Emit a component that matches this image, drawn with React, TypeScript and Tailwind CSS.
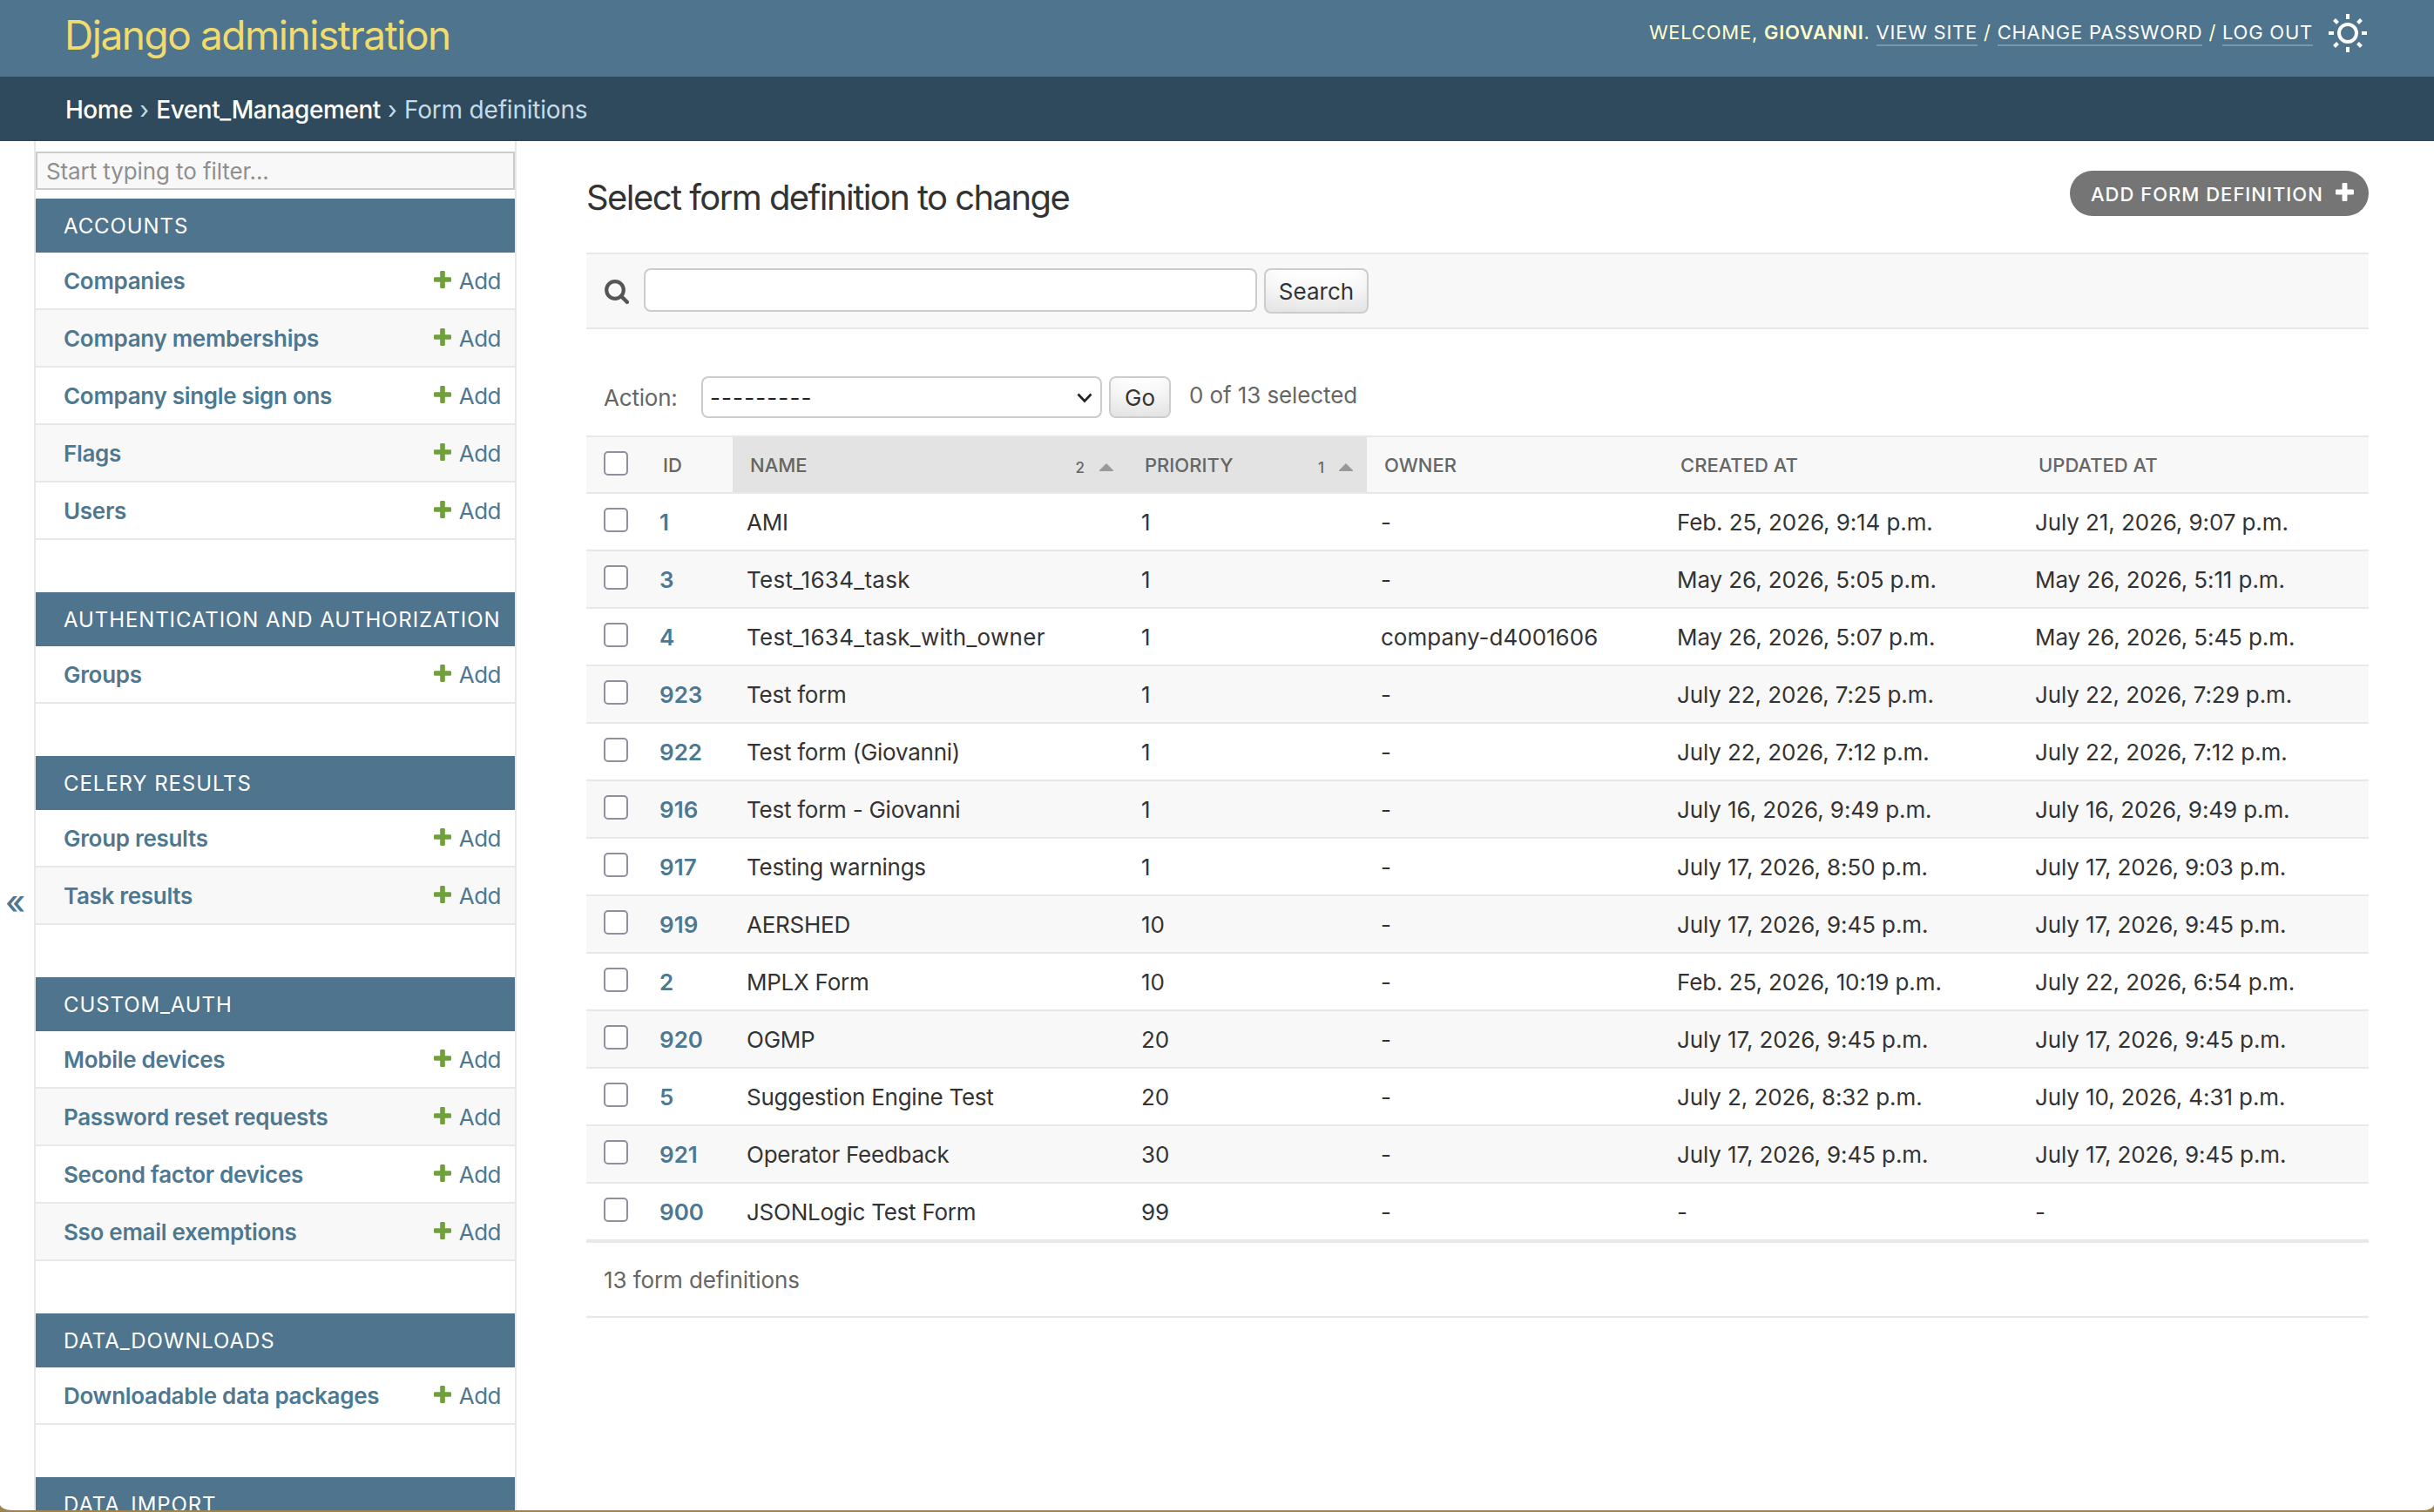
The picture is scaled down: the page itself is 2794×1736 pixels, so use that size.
import React from "react";

type SidebarApp = {
  name: string;
  models: string[];
};

type FormDefinition = {
  id: number;
  name: string;
  priority: number;
  owner: string;
  createdAt: string;
  updatedAt: string;
};

const apps: SidebarApp[] = [
  {
    name: "Accounts",
    models: [
      "Companies",
      "Company memberships",
      "Company single sign ons",
      "Flags",
      "Users",
    ],
  },
  { name: "Authentication and Authorization", models: ["Groups"] },
  { name: "Celery Results", models: ["Group results", "Task results"] },
  {
    name: "Custom_Auth",
    models: [
      "Mobile devices",
      "Password reset requests",
      "Second factor devices",
      "Sso email exemptions",
    ],
  },
  { name: "Data_Downloads", models: ["Downloadable data packages"] },
  { name: "Data_Import", models: [] },
];

const rows: FormDefinition[] = [
  { id: 1, name: "AMI", priority: 1, owner: "-", createdAt: "Feb. 25, 2026, 9:14 p.m.", updatedAt: "July 21, 2026, 9:07 p.m." },
  { id: 3, name: "Test_1634_task", priority: 1, owner: "-", createdAt: "May 26, 2026, 5:05 p.m.", updatedAt: "May 26, 2026, 5:11 p.m." },
  { id: 4, name: "Test_1634_task_with_owner", priority: 1, owner: "company-d4001606", createdAt: "May 26, 2026, 5:07 p.m.", updatedAt: "May 26, 2026, 5:45 p.m." },
  { id: 923, name: "Test form", priority: 1, owner: "-", createdAt: "July 22, 2026, 7:25 p.m.", updatedAt: "July 22, 2026, 7:29 p.m." },
  { id: 922, name: "Test form (Giovanni)", priority: 1, owner: "-", createdAt: "July 22, 2026, 7:12 p.m.", updatedAt: "July 22, 2026, 7:12 p.m." },
  { id: 916, name: "Test form - Giovanni", priority: 1, owner: "-", createdAt: "July 16, 2026, 9:49 p.m.", updatedAt: "July 16, 2026, 9:49 p.m." },
  { id: 917, name: "Testing warnings", priority: 1, owner: "-", createdAt: "July 17, 2026, 8:50 p.m.", updatedAt: "July 17, 2026, 9:03 p.m." },
  { id: 919, name: "AERSHED", priority: 10, owner: "-", createdAt: "July 17, 2026, 9:45 p.m.", updatedAt: "July 17, 2026, 9:45 p.m." },
  { id: 2, name: "MPLX Form", priority: 10, owner: "-", createdAt: "Feb. 25, 2026, 10:19 p.m.", updatedAt: "July 22, 2026, 6:54 p.m." },
  { id: 920, name: "OGMP", priority: 20, owner: "-", createdAt: "July 17, 2026, 9:45 p.m.", updatedAt: "July 17, 2026, 9:45 p.m." },
  { id: 5, name: "Suggestion Engine Test", priority: 20, owner: "-", createdAt: "July 2, 2026, 8:32 p.m.", updatedAt: "July 10, 2026, 4:31 p.m." },
  { id: 921, name: "Operator Feedback", priority: 30, owner: "-", createdAt: "July 17, 2026, 9:45 p.m.", updatedAt: "July 17, 2026, 9:45 p.m." },
  { id: 900, name: "JSONLogic Test Form", priority: 99, owner: "-", createdAt: "-", updatedAt: "-" },
];

const PlusIcon = ({ className }: { className: string }) => (
  <svg viewBox="0 0 20 20" className={className} fill="currentColor">
    <path d="M8.4 0h3.2a1.2 1.2 0 0 1 1.2 1.2v6h6a1.2 1.2 0 0 1 1.2 1.2v3.2a1.2 1.2 0 0 1-1.2 1.2h-6v6a1.2 1.2 0 0 1-1.2 1.2H8.4a1.2 1.2 0 0 1-1.2-1.2v-6h-6A1.2 1.2 0 0 1 0 11.6V8.4a1.2 1.2 0 0 1 1.2-1.2h6v-6A1.2 1.2 0 0 1 8.4 0z" />
  </svg>
);

const SunIcon = () => (
  <svg
    viewBox="0 0 44 44"
    className="ml-[18px] h-11 w-11 shrink-0"
    fill="none"
    stroke="#fff"
    strokeWidth="4"
  >
    <circle cx="22" cy="22" r="10" />
    <path d="M22 0v6M22 38v6M0 22h6M38 22h6M6.5 6.5l4 4M33.5 33.5l4 4M37.5 6.5l-4 4M10.5 33.5l-4 4" />
  </svg>
);

const Checkbox = () => (
  <input
    type="checkbox"
    className="block h-7 w-7 appearance-none rounded-[5px] border-2 border-[#8f8f9d] bg-white"
  />
);

const SortMark = ({ priority }: { priority: number }) => (
  <span className="flex items-center pt-1">
    <span className="pt-[3px] text-[17px] font-medium">{priority}</span>
    <svg viewBox="0 0 16 9" className="mr-4 ml-[17px] h-[9px] w-4" fill="#999">
      <path d="M8 0l8 8v1H0V8z" />
    </svg>
  </span>
);

const HeaderLink = ({ children }: { children: React.ReactNode }) => (
  <a className="border-b-2 border-white/25 pb-[1px] text-white">{children}</a>
);

const Sidebar = () => (
  <nav className="w-[554px] shrink-0 overflow-hidden border-x-2 border-[#e8e8e8] pt-3">
    <input
      type="text"
      placeholder="Start typing to filter..."
      className="mb-2.5 block h-11 w-full border-2 border-[#ccc] bg-[#f8f8f8] px-2.5 text-[26px] tracking-[-0.1px] placeholder:text-[#8f8f8f]"
    />
    {apps.map((app) => (
      <div key={app.name} className="mb-[60px]">
        <h2 className="h-[62px] bg-[#4f748e] px-8 text-[24px] leading-[64px] tracking-[0.9px] whitespace-nowrap text-white uppercase">
          {app.name}
        </h2>
        {app.models.map((model) => (
          <div
            key={model}
            className="flex h-[66px] items-center border-b-2 border-[#e8e8e8] pr-4 pl-8 text-[#4d7892] even:bg-white odd:bg-[#f8f8f8]"
          >
            <a className="flex-1 font-semibold tracking-[-0.3px] whitespace-nowrap">
              {model}
            </a>
            <PlusIcon className="mr-[9px] mb-[3px] h-5 w-5 text-[#6fa03a]" />
            <a className="tracking-[-0.5px]">Add</a>
          </div>
        ))}
      </div>
    ))}
  </nav>
);

const ResultTable = () => (
  <table className="w-full table-fixed border-collapse text-left">
    <colgroup>
      <col className="w-[68px]" />
      <col className="w-[100px]" />
      <col className="w-[453px]" />
      <col className="w-[275px]" />
      <col className="w-[340px]" />
      <col className="w-[411px]" />
      <col />
    </colgroup>
    <thead>
      <tr className="h-[67px] bg-[#f8f8f8] text-[22px] text-[#666] uppercase shadow-[inset_0_2px_#e8e8e8,inset_0_-2px_#e8e8e8]">
        <th className="pb-[3px] pl-5">
          <Checkbox />
        </th>
        <th className="pt-0.5 pl-5 font-medium">ID</th>
        <th className="bg-[#e3e3e3] pt-0.5 pl-5 font-medium shadow-[inset_0_2px_#e8e8e8,inset_0_-2px_#e8e8e8]">
          <div className="flex items-center justify-between">
            Name
            <SortMark priority={2} />
          </div>
        </th>
        <th className="bg-[#e3e3e3] pt-0.5 pl-5 font-medium shadow-[inset_0_2px_#e8e8e8,inset_0_-2px_#e8e8e8]">
          <div className="flex items-center justify-between">
            Priority
            <SortMark priority={1} />
          </div>
        </th>
        <th className="pt-0.5 pl-5 font-medium">Owner</th>
        <th className="pt-0.5 pl-5 font-medium">Created at</th>
        <th className="pt-0.5 pl-5 font-medium">Updated at</th>
      </tr>
    </thead>
    <tbody>
      {rows.map((row) => (
        <tr
          key={row.id}
          className="h-[66px] whitespace-nowrap text-[#333] shadow-[inset_0_-2px_#e8e8e8] even:bg-[#f8f8f8]"
        >
          <td className="pb-[6px] pl-5">
            <Checkbox />
          </td>
          <td className="pb-0.5 pl-4 font-semibold text-[#4d7892]">{row.id}</td>
          <td
            className={
              row.name.includes("_")
                ? "pb-0.5 pl-4 tracking-[0.28px]"
                : "pb-0.5 pl-4 tracking-[-0.25px]"
            }
          >
            {row.name}
          </td>
          <td className="pb-0.5 pl-4">{row.priority}</td>
          <td className="pb-0.5 pl-4">{row.owner}</td>
          <td className="pb-0.5 pl-4 tracking-[-0.1px]">{row.createdAt}</td>
          <td className="pb-0.5 pl-4 tracking-[-0.1px]">{row.updatedAt}</td>
        </tr>
      ))}
    </tbody>
  </table>
);

const App = () => {
  return (
    <div className="h-[1736px] w-[2794px] overflow-hidden bg-[#9d8252]">
      <div className="flex h-[1734px] flex-col overflow-hidden bg-white font-['Inter',sans-serif] text-[26px] text-[#333] [border-bottom-left-radius:14px_7px] [border-bottom-right-radius:12px_7px]">
        <header className="flex h-[88px] shrink-0 items-start justify-between bg-[#4f748e] pr-[77px] pl-[74px]">
          <h1 className="text-[46px] leading-[80px] tracking-[-1.45px] whitespace-nowrap text-[#f0db6f]">
            Django administration
          </h1>
          <div className="flex pt-4 text-[22px] tracking-[0.76px] whitespace-nowrap text-[#ffffcc] uppercase">
            <div className="pt-1.5 leading-[30px]">
              Welcome, <strong className="font-semibold">Giovanni</strong>.{" "}
              <HeaderLink>View site</HeaderLink> /{" "}
              <HeaderLink>Change password</HeaderLink> /{" "}
              <HeaderLink>Log out</HeaderLink>
            </div>
            <SunIcon />
          </div>
        </header>

        <nav className="h-[74px] shrink-0 bg-[#2f4a5c] pl-[75px] text-[28px] leading-[77px] tracking-[-0.2px] text-[#c4dce8]">
          <a className="font-medium tracking-[-0.5px] text-white">Home</a>
          <span className="tracking-[0.2px]"> › </span>
          <a className="font-medium tracking-[-0.45px] text-white">
            Event_Management
          </a>
          <span className="tracking-[0.2px]"> › </span>
          Form definitions
        </nav>

        <div className="flex min-h-0 flex-1">
          <button className="w-[39px] shrink-0 pt-[174px] pr-1 text-[38px] leading-none font-medium text-[#4d7892]">
            «
          </button>
          <Sidebar />

          <main className="min-w-0 flex-1 pr-[75px] pl-20">
            <div className="flex h-32 items-start justify-between">
              <h1 className="pt-10 text-[40px] leading-[50px] tracking-[-1.57px] whitespace-nowrap">
                Select form definition to change
              </h1>
              <a className="mt-[34px] flex h-[52px] w-[343px] items-center justify-between rounded-full bg-[#757575] pt-0.5 pr-[17px] pl-6 text-[22px] font-medium tracking-[1px] whitespace-nowrap text-white uppercase">
                Add form definition
                <PlusIcon className="mb-1.5 h-[21px] w-[21px]" />
              </a>
            </div>

            <div className="flex h-[88px] items-start border-y-2 border-[#e8e8e8] bg-[#f8f8f8] pt-4 pl-[21px]">
              <svg
                viewBox="0 0 28 28"
                className="mt-[13px] mr-[17px] h-7 w-7"
                fill="none"
                stroke="#555"
              >
                <circle cx="12" cy="12" r="9.8" strokeWidth="4.2" />
                <path d="M19 19l6.8 6.8" strokeWidth="4.4" strokeLinecap="round" />
              </svg>
              <input
                type="text"
                className="h-[50px] w-[704px] rounded-lg border-2 border-[#ccc] bg-white px-3"
              />
              <button className="ml-2 h-[52px] w-[120px] rounded-lg border-2 border-[#ccc] bg-white shadow-[inset_0_-30px_40px_-20px_rgba(0,0,0,0.15)]">
                Search
              </button>
            </div>

            <div className="flex h-[122px] items-start pt-[54px] pl-5 leading-[48px] text-[#666]">
              <span className="w-28 pt-[1px] tracking-[-0.2px]">Action:</span>
              <div className="flex h-12 w-[460px] items-center justify-between rounded-lg border-2 border-[#ccc] bg-white pr-[9px] pl-2 text-[#222]">
                <span className="pt-0.5 tracking-[1.1px]">---------</span>
                <svg viewBox="0 0 18 12" className="mt-0.5 h-3 w-[18px]" fill="none" stroke="#222" strokeWidth="2.6">
                  <path d="M1.5 1.5l7.5 8 7.5-8" />
                </svg>
              </div>
              <button className="ml-2 h-12 w-[71px] rounded-lg border-2 border-[#ccc] bg-white pt-0.5 leading-none text-[#333] shadow-[inset_0_-30px_40px_-20px_rgba(0,0,0,0.15)]">
                Go
              </button>
              <span className="-mt-0.5 ml-[21px] tracking-[-0.1px]">
                0 of 13 selected
              </span>
            </div>

            <ResultTable />
            <p className="h-[88px] border-y-2 border-[#e8e8e8] pl-5 leading-[86px] tracking-[-0.1px] text-[#666]">
              13 form definitions
            </p>
          </main>
        </div>
      </div>
    </div>
  );
};

export default App;
